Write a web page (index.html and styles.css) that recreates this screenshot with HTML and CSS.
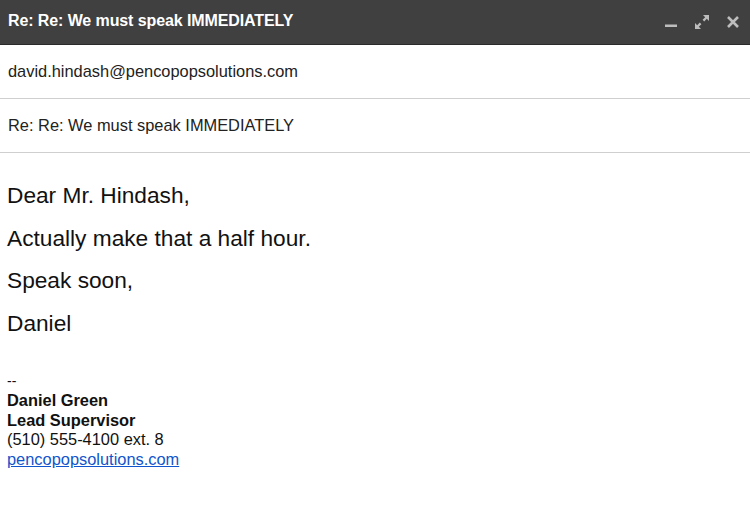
FILE: index.html
```html
<!DOCTYPE html>
<html lang="en">
<head>
  <meta charset="UTF-8"/>
  <title>Re: Re: We must speak IMMEDIATELY</title>
  <link rel="stylesheet" href="styles.css">
</head>
<body>
  <div class="compose">
    <div class="titlebar">
      <span class="title">Re: Re: We must speak IMMEDIATELY</span>
      <div class="controls">
        <svg class="ctl" width="14" height="14" viewBox="0 0 14 14">
          <rect x="1" y="9.5" width="12" height="2.5" fill="#bdbdbd"/>
        </svg>
        <svg class="ctl" width="16" height="16" viewBox="0 0 16 16">
          <path d="M9 1h6v6l-2.2-2.2-2.6 2.6-1.6-1.6 2.6-2.6z M7 15H1V9l2.2 2.2 2.6-2.6 1.6 1.6-2.6 2.6z" fill="#bdbdbd"/>
        </svg>
        <svg class="ctl" width="14" height="14" viewBox="0 0 14 14">
          <path d="M2 2l10 10M12 2L2 12" stroke="#bdbdbd" stroke-width="2.6"/>
        </svg>
      </div>
    </div>

    <div class="field">david.hindash@pencopopsolutions.com</div>
    <div class="field">Re: Re: We must speak IMMEDIATELY</div>

    <div class="message">
      <p>Dear Mr. Hindash,</p>
      <p>Actually make that a half hour.</p>
      <p>Speak soon,</p>
      <p>Daniel</p>
    </div>

    <div class="signature">
      <div class="dash">--</div>
      <div><strong>Daniel Green</strong></div>
      <div><strong>Lead Supervisor</strong></div>
      <div>(510) 555-4100 ext. 8</div>
      <div><a href="#">pencopopsolutions.com</a></div>
    </div>
  </div>
</body>
</html>
```

FILE: styles.css
```css
* {
  margin: 0;
  padding: 0;
  box-sizing: border-box;
}

body {
  font-family: "Liberation Sans", Arial, sans-serif;
  background: #fff;
  color: #222;
}

.compose {
  width: 750px;
}

.titlebar {
  height: 45px;
  background: #404040;
  border-bottom: 1px solid #2a2a2a;
  display: flex;
  align-items: center;
  justify-content: space-between;
  padding: 0 10px 0 8px;
}

.title {
  color: #fff;
  font-weight: bold;
  font-size: 16px;
  letter-spacing: -0.1px;
  margin-top: -3px;
}

.controls {
  display: flex;
  align-items: center;
  gap: 16px;
}

.field {
  height: 54px;
  display: flex;
  align-items: center;
  padding: 0 8px;
  font-size: 16.4px;
  color: #222;
  border-bottom: 1px solid #cfcfcf;
}

.message {
  padding: 21px 7px 0;
  font-size: 22.7px;
  color: #111;
}

.message p {
  line-height: 42.7px;
}

.signature {
  padding: 27px 7px 0;
  font-size: 16.4px;
  line-height: 19.5px;
  color: #111;
}

.signature .dash {
  font-size: 14px;
}

.signature a {
  color: #1155cc;
  text-decoration: underline;
}
```
